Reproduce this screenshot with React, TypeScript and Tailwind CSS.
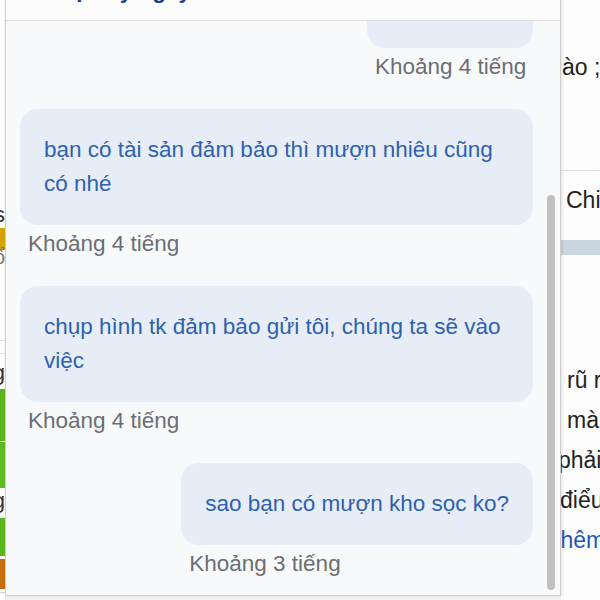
import React from "react";

type Msg = { text: string; mine: boolean; time: string; w?: string };

const messages: Msg[] = [
  { text: "ok nhé", mine: true, time: "Khoảng 4 tiếng", w: "w-[166px]" },
  {
    text: "bạn có tài sản đảm bảo thì mượn nhiêu cũng có nhé",
    mine: false,
    time: "Khoảng 4 tiếng",
  },
  {
    text: "chụp hình tk đảm bảo gửi tôi, chúng ta sẽ vào việc",
    mine: false,
    time: "Khoảng 4 tiếng",
  },
  { text: "sao bạn có mượn kho sọc ko?", mine: true, time: "Khoảng 3 tiếng" },
];

function LeftPage() {
  // sliver of the page behind the chat box
  return (
    <div className="w-[5px] h-full shrink-0 flex flex-col bg-white overflow-hidden">
      <div className="h-[205px]" />
      <div className="h-[20px] flex justify-end items-center text-[22px] leading-none text-[#333]">
        s
      </div>
      <div className="h-[3px]" />
      <div className="h-[22px] bg-[#d6a300]" />
      <div className="h-[14px] flex justify-end items-center text-[20px] leading-none text-[#777]">
        ổ
      </div>
      <div className="h-[76px]" />
      <div className="h-px bg-[#dcdcdc]" />
      <div className="h-[12px]" />
      <div className="h-px bg-[#dcdcdc]" />
      <div className="h-[10px]" />
      <div className="h-[18px] flex justify-end items-center text-[22px] leading-none text-[#333]">
        g
      </div>
      <div className="h-[7px]" />
      <div className="h-[52px] bg-[#5bb61d]" />
      <div className="h-px bg-[#e8f3e0]" />
      <div className="h-[46px] bg-[#62ba22]" />
      <div className="h-[4px]" />
      <div className="h-[18px] flex justify-end items-center text-[22px] leading-none text-[#333]">
        g
      </div>
      <div className="h-[8px]" />
      <div className="h-[38px] bg-[#5bb61d]" />
      <div className="h-[3px]" />
      <div className="h-[30px] bg-[#c86f0c]" />
      <div className="h-[3px]" />
      <div className="h-px bg-[#d0d0d0]" />
    </div>
  );
}

function RightPage() {
  return (
    <div className="flex-1 h-full flex flex-col bg-[#fdfdfd] overflow-hidden text-[23px] text-[#222] whitespace-nowrap">
      <div className="h-[47px]" />
      <div className="h-[40px] leading-[40px] ml-[1px]">ào ;</div>
      <div className="h-[83px]" />
      <div className="h-px bg-[#e2e2e2]" />
      <div className="h-[10px]" />
      <div className="h-[38px] leading-[38px] ml-[5px]">Chi</div>
      <div className="h-[21px]" />
      <div className="h-[15px] bg-[#c9d5df]" />
      <div className="h-[105px]" />
      <div className="h-[40px] leading-[40px] ml-[6px]">rũ rượi</div>
      <div className="h-[40px] leading-[40px] ml-[6px]">mà</div>
      <div className="h-[40px] leading-[40px] ml-[-3px]">phải</div>
      <div className="h-[40px] leading-[40px] ml-[-1px]">điểu</div>
      <div className="h-[40px] leading-[40px] ml-[-7px] text-[#2159b8]">thêm</div>
    </div>
  );
}

function Message({ m, first }: { m: Msg; first: boolean }) {
  return (
    <div
      className={`flex ${m.mine ? "justify-end" : "justify-start"} ${
        first ? "mt-[-55px]" : ""
      } mb-[28px]`}
    >
      <div className="flex flex-col max-w-full">
        <div
          className={`bg-[#e7edf7] rounded-[18px] px-[24px] py-[24px] text-[22.5px] leading-[34px] text-[#2f61ad] ${
            m.w ?? ""
          }`}
        >
          {m.text}
        </div>
        <div className="mt-[5px] pl-2 text-[22.5px] leading-[28px] text-[#6b6e73] whitespace-nowrap">
          {m.time}
        </div>
      </div>
    </div>
  );
}

function ChatPanel() {
  return (
    <div className="relative z-10 w-[556px] h-[596px] shrink-0 flex flex-col bg-[#f8f9fa] border-l border-r border-b border-[#cdcdcd] shadow-[1px_0_3px_rgba(0,0,0,0.12)]">
      {/* header, scrolled mostly out of view */}
      <div className="h-[21px] shrink-0 overflow-hidden bg-[#fcfcfc] border-b border-[#dedede] pl-[14px]">
        <div className="mt-[-22px] text-[22.5px] leading-[26px] font-bold text-[#1f3f86] whitespace-nowrap">
          Hỗ trợ vay ngay
        </div>
      </div>

      <div className="flex-1 flex overflow-hidden">
        <div className="flex-1 flex flex-col pl-[14px] pr-[14px] overflow-hidden">
          {messages.map((m, i) => (
            <Message key={i} m={m} first={i === 0} />
          ))}
        </div>
        <div className="w-[8px] mr-[5px] shrink-0">
          <div className="mt-[174px] h-[395px] w-[8px] rounded-full bg-[#c1c1c1]" />
        </div>
      </div>
    </div>
  );
}

export default function App() {
  return (
    <div className="w-[600px] h-[600px] overflow-hidden flex bg-[#f3f3f3] font-['Liberation_Sans',Arial,sans-serif]">
      <LeftPage />
      <ChatPanel />
      <RightPage />
    </div>
  );
}
